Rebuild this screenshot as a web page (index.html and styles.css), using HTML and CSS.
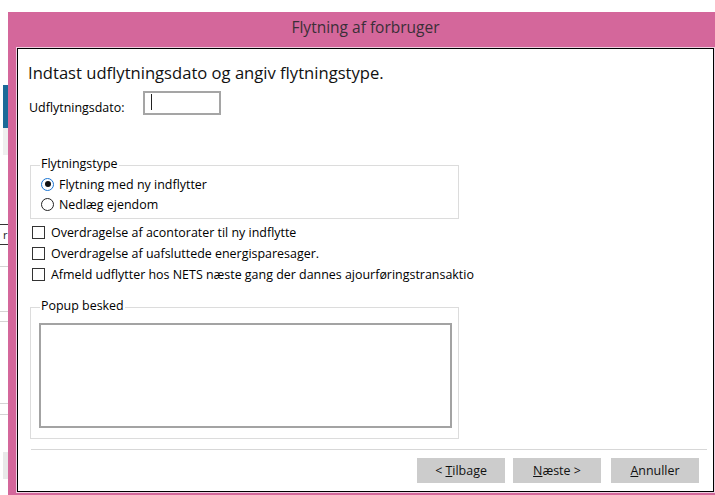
FILE: index.html
```html
<!DOCTYPE html>
<html lang="da">
<head>
<meta charset="utf-8">
<title>Flytning af forbruger</title>
<link rel="stylesheet" href="styles.css">
</head>
<body>
  <div class="desk">
    <div class="desk-tab"></div>
    <div class="desk-tab-foot"></div>
    <div class="desk-rule dark rule-a"></div>
    <div class="desk-glyph">r</div>
    <div class="desk-rule dark"></div>
    <div class="desk-rule rule-b"></div>
    <div class="desk-rule rule-c"></div>
    <div class="desk-rule rule-d"></div>
    <div class="desk-rule rule-e"></div>
    <div class="desk-rule rule-f"></div>
    <div class="desk-block"></div>
  </div>

  <div class="window">
    <div class="titlebar">Flytning af forbruger</div>
    <div class="client">
      <h1 class="lead">Indtast udflytningsdato og angiv flytningstype.</h1>

      <div class="date-row">
        <label class="date-label">Udflytningsdato:</label>
        <div class="date-input"><span class="caret"></span></div>
      </div>

      <div class="group type-group">
        <div class="legend">Flytningstype</div>
        <div class="radio-list">
          <div class="radio-row"><span class="radio checked"><span class="dot"></span></span><span>Flytning med ny indflytter</span></div>
          <div class="radio-row"><span class="radio"></span><span>Nedlæg ejendom</span></div>
        </div>
      </div>

      <div class="checks">
        <div class="check-row"><span class="box"></span><span>Overdragelse af acontorater til ny indflytte</span></div>
        <div class="check-row"><span class="box"></span><span>Overdragelse af uafsluttede energisparesager.</span></div>
        <div class="check-row"><span class="box"></span><span>Afmeld udflytter hos NETS næste gang der dannes ajourføringstransaktio</span></div>
      </div>

      <div class="group popup-group">
        <div class="legend">Popup besked</div>
        <div class="popup-text"></div>
      </div>

      <div class="separator"></div>

      <div class="buttons">
        <button class="btn">&lt; <u>T</u>ilbage</button>
        <button class="btn btn-next"><u>N</u>æste &gt;</button>
        <button class="btn btn-cancel"><u>A</u>nnuller</button>
      </div>
    </div>
  </div>
</body>
</html>
```

FILE: styles.css
```css
* {
  box-sizing: border-box;
}

html,
body {
  margin: 0;
  padding: 0;
}

body {
  width: 715px;
  height: 495px;
  overflow: hidden;
  background: #ffffff;
  font-family: "Open Sans", "Noto Sans", sans-serif;
  font-size: 12.45px;
  color: #000000;
  display: flex;
  align-items: flex-start;
}

/* strip of the application behind the dialog */
.desk {
  flex: none;
  width: 8px;
  display: flex;
  flex-direction: column;
  overflow: hidden;
}

.desk-tab {
  margin: 85px 0 0 3px;
  width: 5px;
  height: 43px;
  background: #1b6a98;
}

.desk-tab-foot {
  margin-left: 3px;
  width: 5px;
  height: 27px;
  background: #efefef;
}

.desk-rule {
  height: 1px;
  background: #d4d4d4;
}

.desk-rule.dark {
  background: #333333;
}

.rule-a { margin-top: 69px; }
.rule-b { margin-top: 21px; }
.rule-c { margin-top: 44px; }
.rule-d { margin-top: 9px; }
.rule-e { margin-top: 81px; }
.rule-f { margin-top: 10px; }

.desk-glyph {
  height: 19px;
  line-height: 19px;
  padding-left: 3px;
  font-size: 11px;
  color: #222222;
  white-space: nowrap;
}

.desk-block {
  margin: 37px 0 0 3px;
  width: 5px;
  height: 27px;
  background: #e9e9e9;
}

/* dialog window */
.window {
  flex: none;
  width: 715px;
  height: 483px;
  margin-top: 12px;
  padding: 0 9px;
  background: #d4679b;
  display: flex;
  flex-direction: column;
}

.titlebar {
  height: 35px;
  line-height: 31px;
  text-align: center;
  font-size: 15.5px;
  color: #3a2f37;
}

.client {
  margin-top: 1px;
  height: 444px;
  background: #ffffff;
  border: 1px solid #000000;
  box-shadow: 0 0 0 1px #f0cfe0;
  padding: 0 14px 0 11px;
  display: flex;
  flex-direction: column;
}

.lead {
  margin: 13px 0 0 -1px;
  font-size: 16.6px;
  line-height: 22px;
  font-weight: normal;
  color: #111111;
}

.date-row {
  margin-top: 7px;
  display: flex;
  align-items: flex-start;
}

.date-label {
  flex: none;
  width: 114px;
  margin-top: 9px;
  line-height: 16px;
}

.date-input {
  width: 78px;
  height: 24px;
  border: 2px solid #a5a5a5;
  padding: 1px 0 0 6px;
}

.caret {
  display: block;
  width: 1px;
  height: 16px;
  background: #222222;
}

/* group boxes */
.group {
  margin-left: 1px;
  width: 429px;
  border: 1px solid #dcdcdc;
  display: flex;
  flex-direction: column;
  align-items: flex-start;
}

.legend {
  margin: -10px 0 0 9px;
  padding: 0 1px;
  line-height: 16px;
  background: #ffffff;
}

.type-group {
  margin-top: 49px;
  padding-bottom: 4px;
}

.radio-list {
  align-self: stretch;
  margin-top: 2px;
}

.radio-row {
  height: 20px;
  padding-left: 10px;
  display: flex;
  align-items: center;
  white-space: nowrap;
}

.radio {
  flex: none;
  width: 13px;
  height: 13px;
  margin-right: 5px;
  border: 1.5px solid #222222;
  border-radius: 50%;
  display: flex;
  align-items: center;
  justify-content: center;
}

.radio.checked {
  border-color: #1a74d2;
}

.dot {
  width: 6px;
  height: 6px;
  border-radius: 50%;
  background: #111111;
}

.checks {
  margin-top: 3px;
}

.check-row {
  height: 21px;
  padding-left: 3px;
  display: flex;
  align-items: center;
  white-space: nowrap;
}

.box {
  flex: none;
  width: 13px;
  height: 13px;
  margin-right: 6px;
  border: 1.5px solid #333333;
  background: #ffffff;
}

.popup-group {
  margin-top: 22px;
  padding-bottom: 10px;
}

.popup-text {
  margin: 9px 0 0 8px;
  width: 413px;
  height: 105px;
  border: 2px solid #a3a3a3;
  background: #ffffff;
}

.separator {
  margin: 10px 0 0 2px;
  width: 676px;
  height: 1px;
  background: #d7d7d7;
}

.buttons {
  margin-top: 8px;
  display: flex;
  justify-content: flex-end;
}

.btn {
  width: 88px;
  height: 25px;
  padding: 0;
  border: none;
  background: #cccccc;
  font-family: inherit;
  font-size: 12.45px;
  color: #111111;
}

.btn-next {
  margin-left: 8px;
}

.btn-cancel {
  margin-left: 10px;
}
```
